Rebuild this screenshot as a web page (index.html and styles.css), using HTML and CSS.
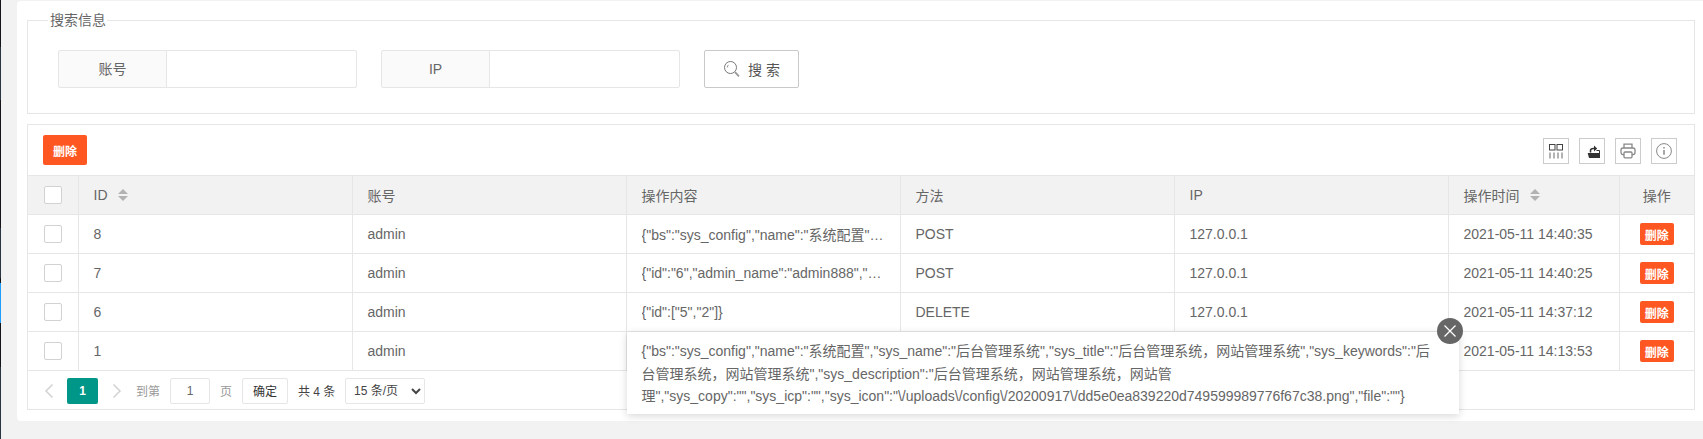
FILE: index.html
```html
<!DOCTYPE html>
<html lang="zh-CN">
<head>
<meta charset="utf-8">
<title>操作日志</title>
<link rel="stylesheet" href="styles.css">
</head>
<body>
<div class="app">
  <aside class="rail">
    <div class="rail-a"></div>
    <div class="rail-b"></div>
    <div class="rail-c"></div>
    <div class="rail-d"></div>
    <div class="rail-e"></div>
    <div class="rail-active"></div>
    <div class="rail-f"></div>
    <div class="rail-g"></div>
  </aside>
  <main class="card">
    <fieldset class="search">
      <legend>搜索信息</legend>
      <form class="search-row">
        <div class="field"><label>账号</label><input type="text"></div>
        <div class="field"><label>IP</label><input type="text"></div>
        <button type="button" class="search-btn">
          <svg viewBox="0 0 16 16" width="16" height="16" fill="none" stroke="#777" stroke-width="1"><circle cx="6.5" cy="6.5" r="6"/><path d="M3.2 6.5a3.4 3.4 0 0 1 1.4-2.7" stroke="#999"/><path d="M11 11.2l4 4.2" stroke-width="1.8" stroke="#999"/></svg>
          <span>搜 索</span>
        </button>
      </form>
    </fieldset>

    <section class="panel">
      <div class="toolbar">
        <button type="button" class="btn-danger">删除</button>
        <div class="tools">
          <span class="tool"><svg viewBox="0 0 16 16" width="16" height="16" fill="none" stroke="#444" stroke-width="1"><rect x="1.5" y="1.5" width="5.5" height="5.5"/><rect x="9" y="1.5" width="5.5" height="5.5"/><path d="M2 9.5v6M6 9.5v6M10 9.5v6M14 9.5v6" stroke="#666"/></svg></span>
          <span class="tool"><svg viewBox="0 0 16 16" width="16" height="16"><path fill="#333" d="M3.7 10H16v5H5z"/><path fill="none" stroke="#333" stroke-width="1.5" d="M6.5 9.5V7.5Q6.5 5.5 9.5 5.5H10.5"/><path fill="#333" d="M10 2.5l3.2 3-3.2 3z"/><path fill="none" stroke="#333" stroke-width="1" d="M12.5 7.5h3V10"/></svg></span>
          <span class="tool"><svg viewBox="0 0 16 16" width="16" height="16" fill="none" stroke="#888" stroke-width="1.3"><path d="M4 5V1.2h8V5"/><rect x="1" y="5" width="14" height="6.6" rx="2"/><rect x="4" y="9" width="8" height="5.8" rx="1" fill="#fff"/></svg></span>
          <span class="tool"><svg viewBox="0 0 16 16" width="16" height="16" fill="none" stroke="#888" stroke-width="1"><circle cx="8" cy="8" r="7.4"/><path d="M8 7v4.8" stroke-width="1.5"/><path d="M8 4v1.6" stroke-width="1.5"/></svg></span>
        </div>
      </div>

      <table class="grid">
        <colgroup>
          <col class="c-check"><col class="c-wide"><col class="c-wide"><col class="c-wide"><col class="c-wide"><col class="c-wide"><col class="c-time"><col class="c-act">
        </colgroup>
        <thead>
          <tr>
            <th class="center"><span class="check"></span></th>
            <th><span class="head">ID<i class="sort"></i></span></th>
            <th>账号</th>
            <th>操作内容</th>
            <th>方法</th>
            <th>IP</th>
            <th><span class="head">操作时间<i class="sort"></i></span></th>
            <th class="center">操作</th>
          </tr>
        </thead>
        <tbody>
          <tr>
            <td class="center"><span class="check"></span></td><td>8</td><td>admin</td>
            <td><div class="clip">{"bs":"sys_config","name":"系统配置","sys_name":"后台管理系统","sys_title":"后台管理系统"}</div></td>
            <td>POST</td><td>127.0.0.1</td><td>2021-05-11 14:40:35</td>
            <td class="center"><button type="button" class="btn-xs">删除</button></td>
          </tr>
          <tr>
            <td class="center"><span class="check"></span></td><td>7</td><td>admin</td>
            <td><div class="clip">{"id":"6","admin_name":"admin888","admin_pass":"","role_id":"1"}</div></td>
            <td>POST</td><td>127.0.0.1</td><td>2021-05-11 14:40:25</td>
            <td class="center"><button type="button" class="btn-xs">删除</button></td>
          </tr>
          <tr>
            <td class="center"><span class="check"></span></td><td>6</td><td>admin</td>
            <td><div class="clip">{"id":["5","2"]}</div></td>
            <td>DELETE</td><td>127.0.0.1</td><td>2021-05-11 14:37:12</td>
            <td class="center"><button type="button" class="btn-xs">删除</button></td>
          </tr>
          <tr>
            <td class="center"><span class="check"></span></td><td>1</td><td>admin</td>
            <td class="has-tip">
              <div class="tip">
                <p>{"bs":"sys_config","name":"系统配置","sys_name":"后台管理系统","sys_title":"后台管理系统，网站管理系统","sys_keywords":"后台管理系统，网站管理系统","sys_description":"后台管理系统，网站管理系统，网站管理","sys_copy":"","sys_icp":"","sys_icon":"\/uploads\/config\/20200917\/dd5e0ea839220d749599989776f67c38.png","file":""}</p>
                <span class="tip-close"><svg viewBox="0 0 14 14" width="14" height="14" fill="none" stroke="#fff" stroke-width="1.3"><path d="M1.5 1.5l11 11M12.5 1.5l-11 11"/></svg></span>
              </div>
            </td>
            <td></td><td></td><td>2021-05-11 14:13:53</td>
            <td class="center"><button type="button" class="btn-xs">删除</button></td>
          </tr>
        </tbody>
      </table>

      <div class="pager">
        <span class="arrow"><svg viewBox="0 0 10 16" width="10" height="16" fill="none" stroke="#d2d2d2" stroke-width="1.5"><path d="M8.5 1.5L2 8l6.5 6.5"/></svg></span>
        <span class="page-on">1</span>
        <span class="arrow next"><svg viewBox="0 0 10 16" width="10" height="16" fill="none" stroke="#d2d2d2" stroke-width="1.5"><path d="M1.5 1.5L8 8l-6.5 6.5"/></svg></span>
        <span class="muted to">到第</span>
        <input class="page-input" type="text" value="1">
        <span class="muted unit">页</span>
        <button type="button" class="go">确定</button>
        <span class="total">共 4 条</span>
        <select class="size"><option>15 条/页</option></select>
      </div>
    </section>
  </main>
</div>
</body>
</html>
```
FILE: styles.css
```css
* { box-sizing: border-box; }
html, body { margin: 0; padding: 0; height: 100%; }
body {
  background: #f2f2f2;
  font-family: "Liberation Sans", "Noto Sans CJK SC", sans-serif;
  font-size: 14px;
  color: #666;
  overflow: hidden;
}
.app { display: flex; align-items: flex-start; height: 439px; }

.rail { width: 1px; height: 439px; display: flex; flex-direction: column; flex: none; }
.rail-a { height: 47px; background: #14161a; }
.rail-b { height: 53px; background: #2a3542; }
.rail-c { height: 128px; background: #14161a; }
.rail-d { height: 50px; background: #2a3542; }
.rail-e { height: 5px; background: #14161a; }
.rail-active { height: 40px; background: #1e9fff; }
.rail-f { height: 44px; background: #14161a; }
.rail-g { flex: 1; background: #2a3542; }

.card {
  flex: 1;
  min-width: 0;
  margin: 1px 0 0 16px;
  height: 420px;
  padding: 9px 8px 0 10px;
  background: #fff;
  border-radius: 4px 0 0 4px;
}

.search {
  margin: 0 0 10px;
  padding: 20px 20px 0 30px;
  height: 104px;
  min-width: 0;
  border: 1px solid #e6e6e6;
}
.search legend {
  margin-left: -10px;
  padding: 0 1px 0 2px;
  font-size: 14px;
  line-height: 20px;
  color: #666;
}
.search-row { display: flex; align-items: flex-start; }
.field { display: flex; width: 299px; margin-right: 24px; height: 38px; }
.field label {
  width: 109px;
  flex: none;
  text-align: center;
  line-height: 36px;
  background: #fafafa;
  border: 1px solid #e6e6e6;
  border-radius: 2px 0 0 2px;
}
.field input {
  flex: 1;
  min-width: 0;
  margin-left: -1px;
  height: 38px;
  padding: 0 10px;
  border: 1px solid #e6e6e6;
  border-radius: 0 2px 2px 0;
  background: #fff;
  outline: none;
}
.search-btn {
  display: flex;
  align-items: center;
  gap: 8px;
  width: 95px;
  height: 38px;
  padding: 0 0 0 19px;
  background: #fff;
  border: 1px solid #c9c9c9;
  border-radius: 2px;
  font: inherit;
  color: #555;
}

.panel { border: 1px solid #e6e6e6; height: 286px; position: relative; }
.toolbar {
  display: flex;
  align-items: flex-start;
  justify-content: space-between;
  height: 50px;
  padding: 10px 17px 0 15px;
}
.btn-danger {
  width: 44px;
  height: 30px;
  padding: 0;
  border: 0;
  border-radius: 2px;
  background: #ff5722;
  color: #fff;
  font: inherit;
  font-size: 12px;
  font-weight: 700;
}
.tools { display: flex; gap: 10px; padding-top: 3px; }
.tool {
  width: 26px;
  height: 26px;
  display: flex;
  align-items: center;
  justify-content: center;
  border: 1px solid #ccc;
}

.grid { width: 100%; border-collapse: collapse; table-layout: fixed; }
.c-check { width: 50px; }
.c-wide { width: 274px; }
.c-time { width: 171px; }
.c-act { width: auto; }
.grid th, .grid td {
  height: 39px;
  padding: 0 15px;
  text-align: left;
  font-weight: 400;
  color: #666;
  border: 1px solid #e6e6e6;
  white-space: nowrap;
  overflow: hidden;
}
.grid tr > :first-child { border-left: 0; }
.grid tr > :last-child { border-right: 0; }
.grid th { background: #f2f2f2; }
.grid th.center, .grid td.center { text-align: center; padding: 0; }
.clip { overflow: hidden; text-overflow: ellipsis; white-space: nowrap; }
.check {
  display: block;
  width: 18px;
  height: 18px;
  margin: 0 auto;
  background: #fff;
  border: 1px solid #d2d2d2;
  border-radius: 2px;
}
.head { display: inline-flex; align-items: center; }
.sort { position: relative; display: inline-block; width: 10px; height: 12px; margin-left: 10px; }
.sort::before, .sort::after {
  content: "";
  position: absolute;
  left: 0;
  border-left: 5px solid transparent;
  border-right: 5px solid transparent;
}
.sort::before { top: 0; border-bottom: 5px solid #b2b2b2; }
.sort::after { bottom: 0; border-top: 5px solid #b2b2b2; }
.btn-xs {
  display: block;
  width: 34px;
  height: 22px;
  margin: 0 auto;
  padding: 0;
  border: 0;
  border-radius: 2px;
  background: #ff5722;
  color: #fff;
  font: inherit;
  font-size: 12px;
  font-weight: 700;
}

.grid td.has-tip { overflow: visible; position: relative; }
.tip {
  position: absolute;
  top: 0;
  left: 0;
  z-index: 5;
  width: 832px;
  min-height: 82px;
  padding: 8px 15px 6px;
  background: #fff;
  box-shadow: 0 2px 8px rgba(0, 0, 0, .16);
  white-space: normal;
  line-height: 22.5px;
}
.tip p { margin: 0; white-space: normal; }
.tip-close {
  position: absolute;
  top: -14px;
  right: -4px;
  width: 26px;
  height: 26px;
  border-radius: 50%;
  background: #666;
  display: flex;
  align-items: center;
  justify-content: center;
}

.pager {
  display: flex;
  align-items: center;
  height: 39px;
  padding: 0 0 0 15px;
  font-size: 12px;
}
.arrow { display: flex; width: 12px; justify-content: center; }
.next { margin-left: 13px; }
.page-on {
  width: 31px;
  height: 26px;
  margin-left: 12px;
  background: #009688;
  color: #fff;
  border-radius: 2px;
  text-align: center;
  line-height: 26px;
  font-weight: 700;
}
.muted { color: #999; }
.to { margin-left: 13px; }
.page-input {
  width: 40px;
  height: 26px;
  margin-left: 10px;
  padding: 0;
  border: 1px solid #e6e6e6;
  border-radius: 2px;
  text-align: center;
  font: inherit;
  color: #666;
}
.unit { margin-left: 10px; }
.go {
  width: 46px;
  height: 26px;
  margin-left: 10px;
  padding: 0;
  background: #fff;
  border: 1px solid #e6e6e6;
  border-radius: 2px;
  font: inherit;
  color: #333;
}
.total { margin-left: 10px; color: #444; width: 37px; white-space: nowrap; }
.size {
  width: 80px;
  height: 26px;
  margin-left: 10px;
  padding: 0 0 0 4px;
  background: #fff;
  border: 1px solid #e6e6e6;
  border-radius: 2px;
  font: inherit;
  color: #444;
  outline: none;
}
```
